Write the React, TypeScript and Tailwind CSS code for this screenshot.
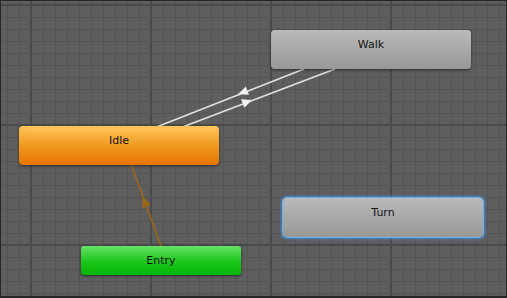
import React from "react";

type Pt = [number, number];

function arrow(tip: Pt, from: Pt, len = 10, half = 4.5): string {
  const dx = tip[0] - from[0];
  const dy = tip[1] - from[1];
  const l = Math.hypot(dx, dy);
  const ux = dx / l;
  const uy = dy / l;
  const bx = tip[0] - ux * len;
  const by = tip[1] - uy * len;
  const nx = -uy * half;
  const ny = ux * half;
  return `${tip[0]},${tip[1]} ${bx + nx},${by + ny} ${bx - nx},${by - ny}`;
}

function Grid() {
  const v: React.ReactNode[] = [];
  for (let x = 7; x < 507; x += 12) {
    const major = (x - 31) % 120 === 0;
    v.push(
      <rect
        key={"v" + x}
        x={major ? x - 1 : x}
        y={0}
        width={major ? 2 : 1}
        height={298}
        fill={major ? "#4a4a4a" : "#545454"}
      />
    );
  }
  for (let y = 5; y < 298; y += 12) {
    const major = (y - 5) % 120 === 0;
    v.push(
      <rect
        key={"h" + y}
        x={0}
        y={major ? y - 1 : y}
        width={507}
        height={major ? 2 : 1}
        fill={major ? "#4a4a4a" : "#545454"}
      />
    );
  }
  return <g>{v}</g>;
}

export default function App() {
  return (
    <div className="relative w-[507px] h-[298px] overflow-hidden border border-[#262626] border-b-2 bg-[#5e5e5e] font-['DejaVu_Sans',sans-serif]">
      <div className="absolute left-[-1px] top-[-1px] w-[507px] h-[298px]">
        <svg className="absolute left-0 top-0" width={507} height={298}>
          <Grid />
          <line x1={156.5} y1={127} x2={304} y2={69} stroke="#e2e2e2" strokeWidth={1.6} />
          <line x1={182.5} y1={127} x2={335} y2={69} stroke="#e2e2e2" strokeWidth={1.6} />
          <polygon points={arrow([238, 94.2], [304, 69])} fill="#f2f2f2" />
          <polygon points={arrow([252, 99.9], [182.5, 127])} fill="#f2f2f2" />
          <line x1={161} y1={246} x2={131} y2={164} stroke="#9a6816" strokeWidth={1.6} />
          <polygon points={arrow([143, 197], [161, 246])} fill="#9a6816" />
        </svg>

        <div className="absolute left-[271px] top-[30px] w-[200px] h-[39px] rounded-[4px] bg-[linear-gradient(#bababa,#989898)] shadow-[0_1px_3px_rgba(0,0,0,0.55)] pt-[7px] text-center text-[11px] leading-[16px] text-[#111]">
          Walk
        </div>

        <div className="absolute left-[19px] top-[126px] w-[200px] h-[39px] rounded-[4px] bg-[linear-gradient(#ffc65c,#f09a20_50%,#e67400)] shadow-[0_1px_3px_rgba(0,0,0,0.55)] pt-[7px] text-center text-[11px] leading-[16px] text-[#111]">
          Idle
        </div>

        <div className="absolute left-[81px] top-[246px] w-[160px] h-[29px] rounded-[3px] bg-[linear-gradient(#66e266,#20c820_50%,#00b400)] shadow-[0_1px_3px_rgba(0,0,0,0.55)] pt-[7px] text-center text-[11px] leading-[16px] text-[#111]">
          Entry
        </div>

        <div className="absolute left-[283px] top-[198px] w-[200px] h-[39px] rounded-[4px] bg-[linear-gradient(#bababa,#989898)] shadow-[0_0_0_1px_#6cb2f0,0_0_3px_2px_rgba(64,140,215,0.85)] pt-[7px] text-center text-[11px] leading-[16px] text-[#111]">
          Turn
        </div>
      </div>
    </div>
  );
}
